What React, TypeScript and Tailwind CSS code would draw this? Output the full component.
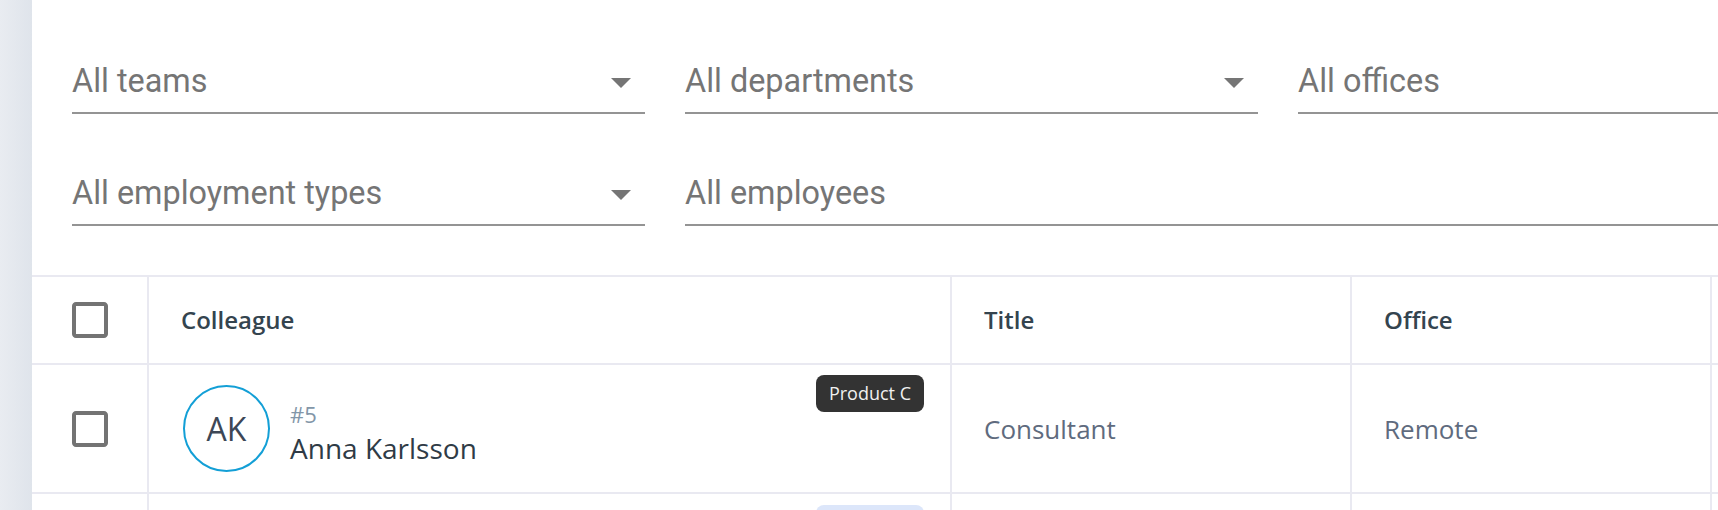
import React from 'react';

interface Filter {
  label: string;
  select: boolean;
  span?: boolean;
}

interface Colleague {
  id: number;
  initials: string;
  name: string;
  title: string;
  office: string;
  tag: string;
}

const filters: Filter[] = [
  { label: 'All teams', select: true },
  { label: 'All departments', select: true },
  { label: 'All offices', select: false },
  { label: 'All employment types', select: true },
  { label: 'All employees', select: false, span: true },
];

const colleagues: Colleague[] = [
  { id: 5, initials: 'AK', name: 'Anna Karlsson', title: 'Consultant', office: 'Remote', tag: 'Product C' },
];

const Checkbox = () => (
  <svg viewBox="0 0 24 24" className="w-12 h-12 fill-[#737373]">
    <path d="M19 5v14H5V5h14m0-2H5c-1.11 0-2 .9-2 2v14c0 1.1.89 2 2 2h14c1.1 0 2-.9 2-2V5c0-1.1-.9-2-2-2z" />
  </svg>
);

const FilterInput = ({ filter }: { filter: Filter }) => (
  <div className={`relative h-16 border-b-2 border-[#949494] pt-3 ${filter.span ? 'col-span-2' : ''}`}>
    <div className="h-[38px] leading-[38px] text-[32.4px] text-[#757575] whitespace-nowrap">{filter.label}</div>
    {filter.select && (
      <svg viewBox="0 0 24 24" className="absolute right-0 top-[8px] w-12 h-12 fill-[#757575]">
        <path d="M7 10l5 5 5-5z" />
      </svg>
    )}
  </div>
);

const cell = 'border-l-2 border-[#e9e9f1] flex items-center';
const cols = 'grid grid-cols-[115px_803px_400px_360px_400px] border-b-2 border-[#e9e9f1]';

export default function App() {
  return (
    <div className="flex w-full h-[510px] overflow-hidden bg-white">
      <div className="w-8 shrink-0 bg-gradient-to-r from-[#e9ecf1] to-[#dfe4eb]" />

      <div className="flex-1 min-w-0 overflow-hidden">
        {/* filters */}
        <div
          className="grid grid-cols-[573px_573px_573px] gap-x-10 gap-y-[48px] pl-10 pt-[50px] pb-[49px] w-max"
          style={{ fontFamily: 'Roboto, "Liberation Sans", sans-serif' }}
        >
          {filters.map((f) => (
            <FilterInput key={f.label} filter={f} />
          ))}
        </div>

        {/* table */}
        <div
          className="border-t-2 border-[#e9e9f1] w-max"
          style={{ fontFamily: '"Open Sans", "Liberation Sans", sans-serif' }}
        >
          <div className={`${cols} h-[88px] text-[24px] leading-8 font-semibold text-[#34444f]`}>
            <div className="flex items-center justify-center">
              <Checkbox />
            </div>
            <div className={`${cell} pl-8`}>Colleague</div>
            <div className={`${cell} pl-8`}>Title</div>
            <div className={`${cell} pl-8`}>Office</div>
            <div className={cell} />
          </div>

          {colleagues.map((c) => (
            <div key={c.id} className={`${cols} h-[129px]`}>
              <div className="flex items-center justify-center">
                <Checkbox />
              </div>
              <div className={`${cell} relative pl-[34px] gap-5`}>
                <div className="w-[87px] h-[87px] rounded-full border-2 border-[#139fd6] flex items-center justify-center text-[32px] text-[#3d4756]">
                  {c.initials}
                </div>
                <div className="flex flex-col gap-[2px] mt-2">
                  <span className="text-[22px] leading-7 text-[#8396a8]">#{c.id}</span>
                  <span className="text-[28px] leading-9 text-[#2f3b46]">{c.name}</span>
                </div>
                <span className="absolute top-[10px] right-[26px] px-[13px] h-[37px] leading-[37px] rounded-lg text-[18px] font-medium bg-[#333333] text-[#f0f0f0]">
                  {c.tag}
                </span>
              </div>
              <div className={`${cell} pl-8 text-[26px] leading-9 text-[#5f6b7e]`}>{c.title}</div>
              <div className={`${cell} pl-8 text-[26px] leading-9 text-[#5f6b7e]`}>{c.office}</div>
              <div className={cell} />
            </div>
          ))}

          {/* next row, only its tag shows above the fold */}
          <div className={`${cols} h-[129px]`}>
            <div />
            <div className={`${cell} relative`}>
              <span className="absolute top-[11px] right-[26px] w-[108px] h-[37px] rounded-lg bg-[#dce6fa]" />
            </div>
            <div className={cell} />
            <div className={cell} />
            <div className={cell} />
          </div>
        </div>
      </div>
    </div>
  );
}
